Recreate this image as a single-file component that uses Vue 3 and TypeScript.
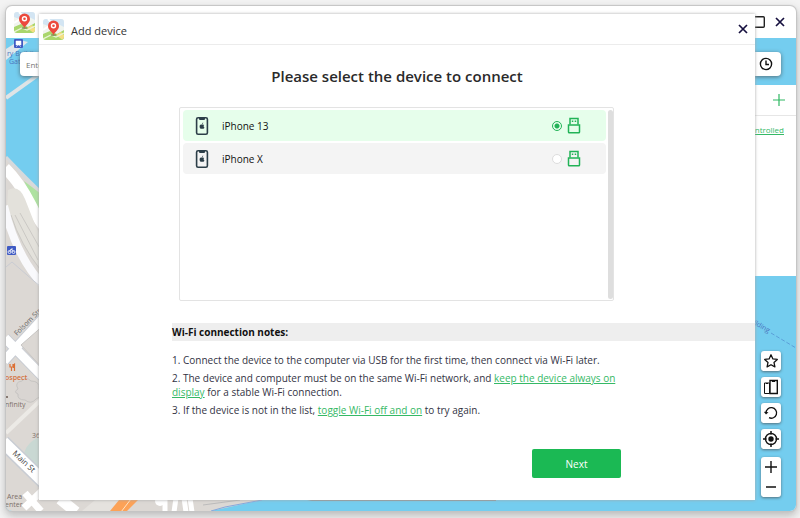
<script setup lang="ts">
import { ref } from 'vue'

interface Device {
  id: string
  name: string
}

const devices: Device[] = [
  { id: 'iphone-13', name: 'iPhone 13' },
  { id: 'iphone-x', name: 'iPhone X' },
]
const selected = ref<string>('iphone-13')
const query = ref<string>('')
</script>

<template>
  <div class="page">
    <svg class="defs" width="0" height="0" aria-hidden="true">
      <symbol id="logo" viewBox="0 0 21 21">
        <rect width="21" height="21" rx="3" fill="#f1f4ef" />
        <path d="M3 0H18a3 3 0 0 1 3 3V8L13 4 8 8 0 5V3a3 3 0 0 1 3-3Z" fill="#d3e5f3" />
        <path d="M0 11 8 6 15 10M5 0 14 9" stroke="#fff" stroke-width="2" fill="none" />
        <path d="M0 15 7 12 14 15 21 11V18a3 3 0 0 1-3 3H3a3 3 0 0 1-3-3Z" fill="#a9d66c" />
        <path d="M13 16 18 13 21 16V18a3 3 0 0 1-2 2.500Z" fill="#f4df83" />
        <path d="M0 20 8 16 13 18 21 14" stroke="#e9f4d7" stroke-width="1.200" fill="none" />
        <ellipse cx="10.500" cy="16" rx="3" ry="1" fill="#8a9a5b" />
        <path d="M10.500 16C9.500 13 5 11 5 7a5.500 5.500 0 0 1 11 0c0 4-4.500 6-5.500 9Z" fill="#ec4a3d" />
        <circle cx="10.500" cy="6.800" r="2.700" fill="#fff" />
        <circle cx="10.500" cy="6.800" r="1.300" fill="#ec4a3d" />
      </symbol>
      <symbol id="cross" viewBox="0 0 10 10">
        <path d="M1 1 9 9M9 1 1 9" stroke="#16103f" stroke-width="1.700" />
      </symbol>
      <symbol id="phone" viewBox="0 0 14 20">
        <rect x="1.600" y="1.800" width="10.800" height="16.400" rx="1.500" fill="none" stroke="#2c3e48" stroke-width="1.600" />
        <path d="M4 2H10V3a1 1 0 0 1-1 1H5a1 1 0 0 1-1-1Z" fill="#2c3e48" />
        <path d="M7 8.600C5.500 7.900 4.600 9 4.600 10.400 4.600 12 5.600 13.200 7 12.700 8.300 13.200 9.300 12.200 9.400 11.400 8.400 11 8.400 9.600 9.200 9.100 8.600 8.300 7.700 8.300 7 8.600ZM7 8.200Q7 7 8.300 6.600 8.300 7.900 7 8.200Z" fill="#2c3e48" />
      </symbol>
      <symbol id="usb" viewBox="0 0 14 17">
        <path d="M3 7.500V1.500H11V7.500" fill="none" stroke="#22b357" stroke-width="1.500" />
        <path d="M1.500 8H12.500V15a.8.8 0 0 1-.8.800H2.300a.8.8 0 0 1-.8-.8Z" fill="none" stroke="#22b357" stroke-width="1.500" />
        <path d="M4.800 3.600H6.300V5.100H4.800ZM7.700 3.600H9.200V5.100H7.700Z" fill="#22b357" />
      </symbol>
    </svg>

    <div class="window">
      <header class="titlebar">
        <svg class="logo"><use href="#logo" /></svg>
        <div class="window-buttons">
          <button type="button" aria-label="Maximize">
            <svg width="12" height="12" viewBox="0 0 12 12"><rect x=".7" y=".7" width="10.600" height="10.600" rx="1" fill="none" stroke="#222" stroke-width="1.400" /></svg>
          </button>
          <button type="button" aria-label="Close window"><svg width="10" height="10"><use href="#cross" /></svg></button>
        </div>
      </header>

      <main class="workspace">
        <svg class="map" viewBox="6 38 790 473" preserveAspectRatio="xMinYMin slice" aria-hidden="true">
          <rect x="6" y="38" width="790" height="473" fill="#74cdef" />
          <path d="M6 49 20 40 28 42 6 60Z" fill="#dfe6ec" />
          <path d="M6 98 45 70" stroke="#dfe4e6" stroke-width="4" />
          <path d="M6 157 Q28 180 45 197V500H290L262 500 211 511H6Z" fill="#dcd8d4" />
          <path d="M24 181 45 197V216L35 205Z" fill="#aee2a1" />
          <path d="M6 157Q28 180 45 196" stroke="#d6d9dc" stroke-width="3" fill="none" />
          <path d="M5 168Q20 183 31 205T46 228" stroke="#fff" stroke-width="11" fill="none" />
          <path d="M8 190Q19 184 25 199L36 227 46 247V274Q24 253 7 207Z" fill="#e3e1db" />
          <path d="M11 215Q20 244 42 272M15 215 38 260M20 213 42 252" stroke="#cac8c4" stroke-width="1" fill="none" />
          <path d="M4 206Q16 257 44 286" stroke="#f9f9fc" stroke-width="8" fill="none" />
          <path d="M6 267 12 262 42 288" stroke="#c9cbd2" stroke-width="1" fill="none" />
          <path d="M4 361 48 313M5 338 46 380" stroke="#c8ccd3" stroke-width="11" />
          <path d="M4 361 48 313M5 338 46 380" stroke="#fff" stroke-width="9" />
          <path d="M21 345 45 324V371Z" fill="#dcd8d4" stroke="#c8c6c4" />
          <path d="M18 389q-4-7 4-8 4-5 9 0 9 0 8 8 5 7-3 10-5 6-11 1-8 0-7-6-5-2 0-5Z" fill="#d9d5d2" stroke="#c6c4c2" />
          <path d="M6 433 45 396" stroke="#eceae6" stroke-width="4" />
          <circle cx="47" cy="460" r="24" fill="#bcd9d2" opacity=".6" />
          <path d="M3 442 46 484" stroke="#c8ccd3" stroke-width="15" />
          <path d="M3 442 46 484" stroke="#fff" stroke-width="12" />
          <path d="M24 508 45 488M25 493 41 511" stroke="#fff" stroke-width="7" />
          <path d="M60 499 76 512" stroke="#fff" stroke-width="11" />
          <path d="M95 500H130L116 511H82Z" fill="#e5e2de" />
          <path d="M119 500H138L127 511H110Z" fill="#fca257" />
          <path d="M131 499 121 512" stroke="#ffe4c5" stroke-width="1" />
          <path d="M165 498V512M184 498 186 512M190 498 192 512M176 498 174 512" stroke="#fff" stroke-width="5" />
          <circle cx="160" cy="501" r="5" fill="#fff" />
          <path d="M203 505 240 500" stroke="#bbb" />
          <path d="M211 511 225 507 262 500" stroke="#86a7dc" fill="none" />
          <path d="M307 500H496V501H312Z" fill="#8c9ba0" />
          <rect x="14" y="39" width="9" height="9" rx="1" fill="#405bc4" />
          <path d="M16 41H21V45H16ZM16 47 18 45M21 47 19 45" fill="#fff" stroke="#fff" stroke-width=".5" />
          <rect x="7" y="246" width="9" height="9" rx="1" fill="#405bc4" />
          <g fill="none" stroke="#fff" stroke-width=".8"><circle cx="9.500" cy="252" r="1.500" /><circle cx="13.500" cy="252" r="1.500" /><path d="M9.500 252 11 249 13.500 252M11 249H13" /></g>
          <path d="M10 364V367H11.500V371M13 364V367H11.500M14.500 371V364Q13 365 13.500 368" fill="none" stroke="#dc7136" stroke-width="1.200" />
          <circle cx="7" cy="397" r="1" fill="#6a5a52" />
          <g class="map-label">
            <text x="7" y="56" class="blue">ry Building</text>
            <text x="9" y="64" class="blue">Gate</text>
            <text x="17" y="336" transform="rotate(-45 17 336)">Folsom Street</text>
            <text x="5" y="380" class="orange">ospect</text>
            <text x="5" y="407" class="brown">nfinity</text>
            <text x="32" y="438" class="brown">36</text>
            <text x="12" y="454" transform="rotate(43 12 454)" class="street">Main St</text>
            <text x="7" y="499" class="brown">Area</text>
            <text x="5" y="507" class="brown">enter</text>
            <text x="753" y="324" transform="rotate(30 753 324)" class="blue">ilding</text>
          </g>
          <path d="M771 333 796 348" stroke="#5b9fd8" stroke-dasharray="4 2" />
        </svg>

        <div class="search">
          <input v-model="query" type="text" aria-label="Search" placeholder="Enter address or coordinates" />
          <button type="button" aria-label="History">
            <svg width="14" height="14" viewBox="0 0 14 14" fill="none" stroke="#111" stroke-width="1.400"><circle cx="7" cy="7" r="5.600" /><path d="M7 3.500V7.500H10" /></svg>
          </button>
        </div>

        <aside class="panel">
          <div class="panel-head">
            <button type="button" aria-label="Add device"><svg width="14" height="14" viewBox="0 0 14 14"><path d="M7 1V13M1 7H13" stroke="#2eb862" stroke-width="1.200" /></svg></button>
          </div>
          <a href="#">Uncontrolled</a>
        </aside>

        <nav class="tools" aria-label="Map tools">
          <button type="button" class="tool" aria-label="Favorites">
            <svg viewBox="0 0 16 16"><path d="M8 1.800 9.900 5.900 14.300 6.400 11 9.400 11.900 13.900 8 11.700 4.100 13.900 5 9.400 1.700 6.400 6.100 5.900Z" stroke-linejoin="round" stroke-width="1.300" /></svg>
          </button>
          <button type="button" class="tool" aria-label="Devices">
            <svg viewBox="0 0 16 16"><path d="M1.500 4H6.500V14.500H1.500Z" stroke-width="1" /><path d="M7 1.500H14.300V14.500H7Z" stroke-width="1.400" /><path d="M9 1.500H12V3H9ZM3 4H5V5H3Z" fill="#111" stroke="none" /></svg>
          </button>
          <button type="button" class="tool" aria-label="Reset">
            <svg viewBox="0 0 16 16"><path d="M3 8A5.300 5.300 0 1 1 6 12.700" stroke-width="1.300" /><path d="M.8 6.800 3 9.600 5.500 7.200Z" fill="#111" stroke="none" /></svg>
          </button>
          <button type="button" class="tool" aria-label="My location">
            <svg viewBox="0 0 16 16"><circle cx="8" cy="8" r="5.500" stroke-width="1.400" /><circle cx="8" cy="8" r="2.700" fill="#111" stroke="none" /><path d="M8 0V3.500M8 12.500V16M0 8H3.500M12.500 8H16" stroke-width="1.500" /></svg>
          </button>
          <div class="zoom">
            <button type="button" aria-label="Zoom in"><svg viewBox="0 0 16 16"><path d="M8 2V14M2 8H14" stroke-width="1.400" /></svg></button>
            <button type="button" aria-label="Zoom out"><svg viewBox="0 0 16 16"><path d="M3 8H13" stroke-width="1.300" /></svg></button>
          </div>
        </nav>
      </main>
    </div>

    <section class="dialog" role="dialog" aria-labelledby="dialog-title">
      <header class="dialog-head">
        <svg class="logo"><use href="#logo" /></svg>
        <h1 id="dialog-title">Add device</h1>
        <button type="button" aria-label="Close"><svg width="10" height="10"><use href="#cross" /></svg></button>
      </header>
      <h2>Please select the device to connect</h2>
      <div class="picker">
        <div class="rows" role="radiogroup" aria-label="Devices">
          <label v-for="device in devices" :key="device.id" class="row" :class="{ active: selected === device.id }">
            <svg class="phone"><use href="#phone" /></svg>
            <span class="name">{{ device.name }}</span>
            <input v-model="selected" type="radio" name="device" :value="device.id" />
            <svg class="usb"><use href="#usb" /></svg>
          </label>
        </div>
        <div class="scrollbar"></div>
      </div>
      <div class="notes">
        <h3>Wi-Fi connection notes:</h3>
        <ol>
          <li>1. Connect the device to the computer via USB for the first time, then connect via Wi-Fi later.</li>
          <li>2. The device and computer must be on the same Wi-Fi network, and <a href="#">keep the device always on display</a> for a stable Wi-Fi connection.</li>
          <li>3. If the device is not in the list, <a href="#">toggle Wi-Fi off and on</a> to try again.</li>
        </ol>
      </div>
      <footer class="actions"><button type="button">Next</button></footer>
    </section>
  </div>
</template>

<style>
body {
  background: #f3f3f3;
}
</style>

<style scoped>
.page {
  position: relative;
  box-sizing: border-box;
  height: 100vh;
  padding: 6px 4px 7px 6px;
  overflow: hidden;
  font-family: "Open Sans", "Noto Sans", sans-serif;
  font-size: 10px;
  color: #333;
}
.defs { position: absolute; }
button {
  display: flex;
  align-items: center;
  justify-content: center;
  padding: 0;
  border: 0;
  background: none;
  font: inherit;
}
h1, h2, h3, ol { margin: 0; padding: 0; font-weight: 400; }
a { color: #35b966; text-decoration: underline; }
.logo { width: 21px; height: 21px; }

.window {
  display: flex;
  flex-direction: column;
  height: 100%;
  overflow: hidden;
  border-radius: 6px;
  background: #fff;
  box-shadow: 0 0 1px 1px #c4c4c4, 0 4px 8px 1px #bdbdbd;
}
.titlebar {
  display: flex;
  align-items: center;
  justify-content: space-between;
  flex: none;
  height: 32px;
  padding: 0 11px 0 8px;
}
.window-buttons { display: flex; align-items: center; gap: 10px; }
.workspace { position: relative; flex: 1; overflow: hidden; }
.map { position: absolute; inset: 0; width: 100%; height: 100%; }
.map-label { font-size: 7px; fill: #666; }
.map-label .blue { fill: #4b74bd; }
.map-label .orange { fill: #d4723e; font-weight: 600; }
.map-label .brown { fill: #7d7069; }
.map-label .street { font-size: 8px; fill: #444; }

.search {
  position: relative;
  display: flex;
  height: 24px;
  margin: 14px 15px 0 14px;
  border-radius: 4px;
  background: #fff;
  box-shadow: 0 1px 4px #52707c;
}
.search input {
  flex: 1;
  padding: 0 6px;
  border: 0;
  background: none;
  font: inherit;
  font-size: 8px;
}
.search button { width: 30px; }
.panel {
  position: absolute;
  top: 47px;
  right: 0;
  width: 200px;
  height: 191px;
  background: #fff;
  text-align: right;
}
.panel-head {
  display: flex;
  justify-content: flex-end;
  align-items: center;
  height: 30px;
  margin-bottom: 6px;
  padding-right: 10px;
  border-bottom: 1px solid #e6e6e6;
}
.panel a { margin-right: 12px; font-size: 8px; line-height: 12px; }
.tools {
  position: absolute;
  right: 15px;
  bottom: 14px;
  display: flex;
  flex-direction: column;
  gap: 6px;
  width: 20px;
}
.tool, .zoom {
  border-radius: 3px;
  background: #fff;
  box-shadow: 0 1px 3px #52707c;
}
.tool { height: 20px; }
.zoom { margin-top: 2px; }
.zoom button { width: 20px; height: 20px; }
.tools svg { width: 16px; height: 16px; fill: none; stroke: #111; }

.dialog {
  position: absolute;
  inset: 14px 45px 18px 39px;
  display: flex;
  flex-direction: column;
  background: #fff;
  box-shadow: 0 0 3px #a8a8a8;
}
.dialog-head {
  display: flex;
  align-items: center;
  gap: 7px;
  flex: none;
  height: 30px;
  padding: 0 7px 0 4px;
  border-bottom: 1px solid #ececec;
}
.dialog-head h1 { flex: 1; padding-top: 3px; font-size: 11px; line-height: 14px; }
h2 {
  margin-top: 19px;
  color: #2a2a2a;
  font-size: 15px;
  font-weight: 600;
  line-height: 24px;
  text-align: center;
}
.picker {
  display: flex;
  flex: 1;
  gap: 2px;
  min-height: 0;
  margin: 19px 141px 22px 140px;
  padding: 2px 0 1px 3px;
  border: 1px solid #e3e3e3;
  border-radius: 2px;
}
.rows { flex: 1; }
.row {
  display: flex;
  align-items: center;
  height: 31px;
  margin-bottom: 2px;
  padding: 0 25px 0 12px;
  border-radius: 4px;
  background: #f4f4f4;
  color: #111;
}
.row.active { background: #e6feeb; }
.phone { width: 14px; height: 20px; }
.name { flex: 1; margin-left: 13px; }
.row input {
  appearance: none;
  box-sizing: border-box;
  width: 10px;
  height: 10px;
  margin: 0 5px 0 0;
  border: 1px solid #ddd;
  border-radius: 50%;
  background: #fff;
}
.row input:checked {
  border-color: #22b357;
  background: radial-gradient(circle, #22b357 0 2px, #e6feeb 3px);
}
.usb { width: 14px; height: 17px; }
.scrollbar { width: 5px; border-radius: 3px; background: #dedede; }

.notes { margin-left: 133px; }
.notes h3 {
  margin-bottom: 12px;
  background: #eee;
  color: #111;
  font-size: 10px;
  font-weight: 700;
  line-height: 18px;
}
.notes ol { margin-right: 134px; color: #334; list-style: none; }
.notes li { margin-bottom: 4px; line-height: 14px; }
.actions {
  display: flex;
  justify-content: flex-end;
  padding: 28px 134px 22px 0;
}
.actions button {
  width: 89px;
  height: 29px;
  border-radius: 2px;
  background: #1bb954;
  color: #fff;
}
</style>
